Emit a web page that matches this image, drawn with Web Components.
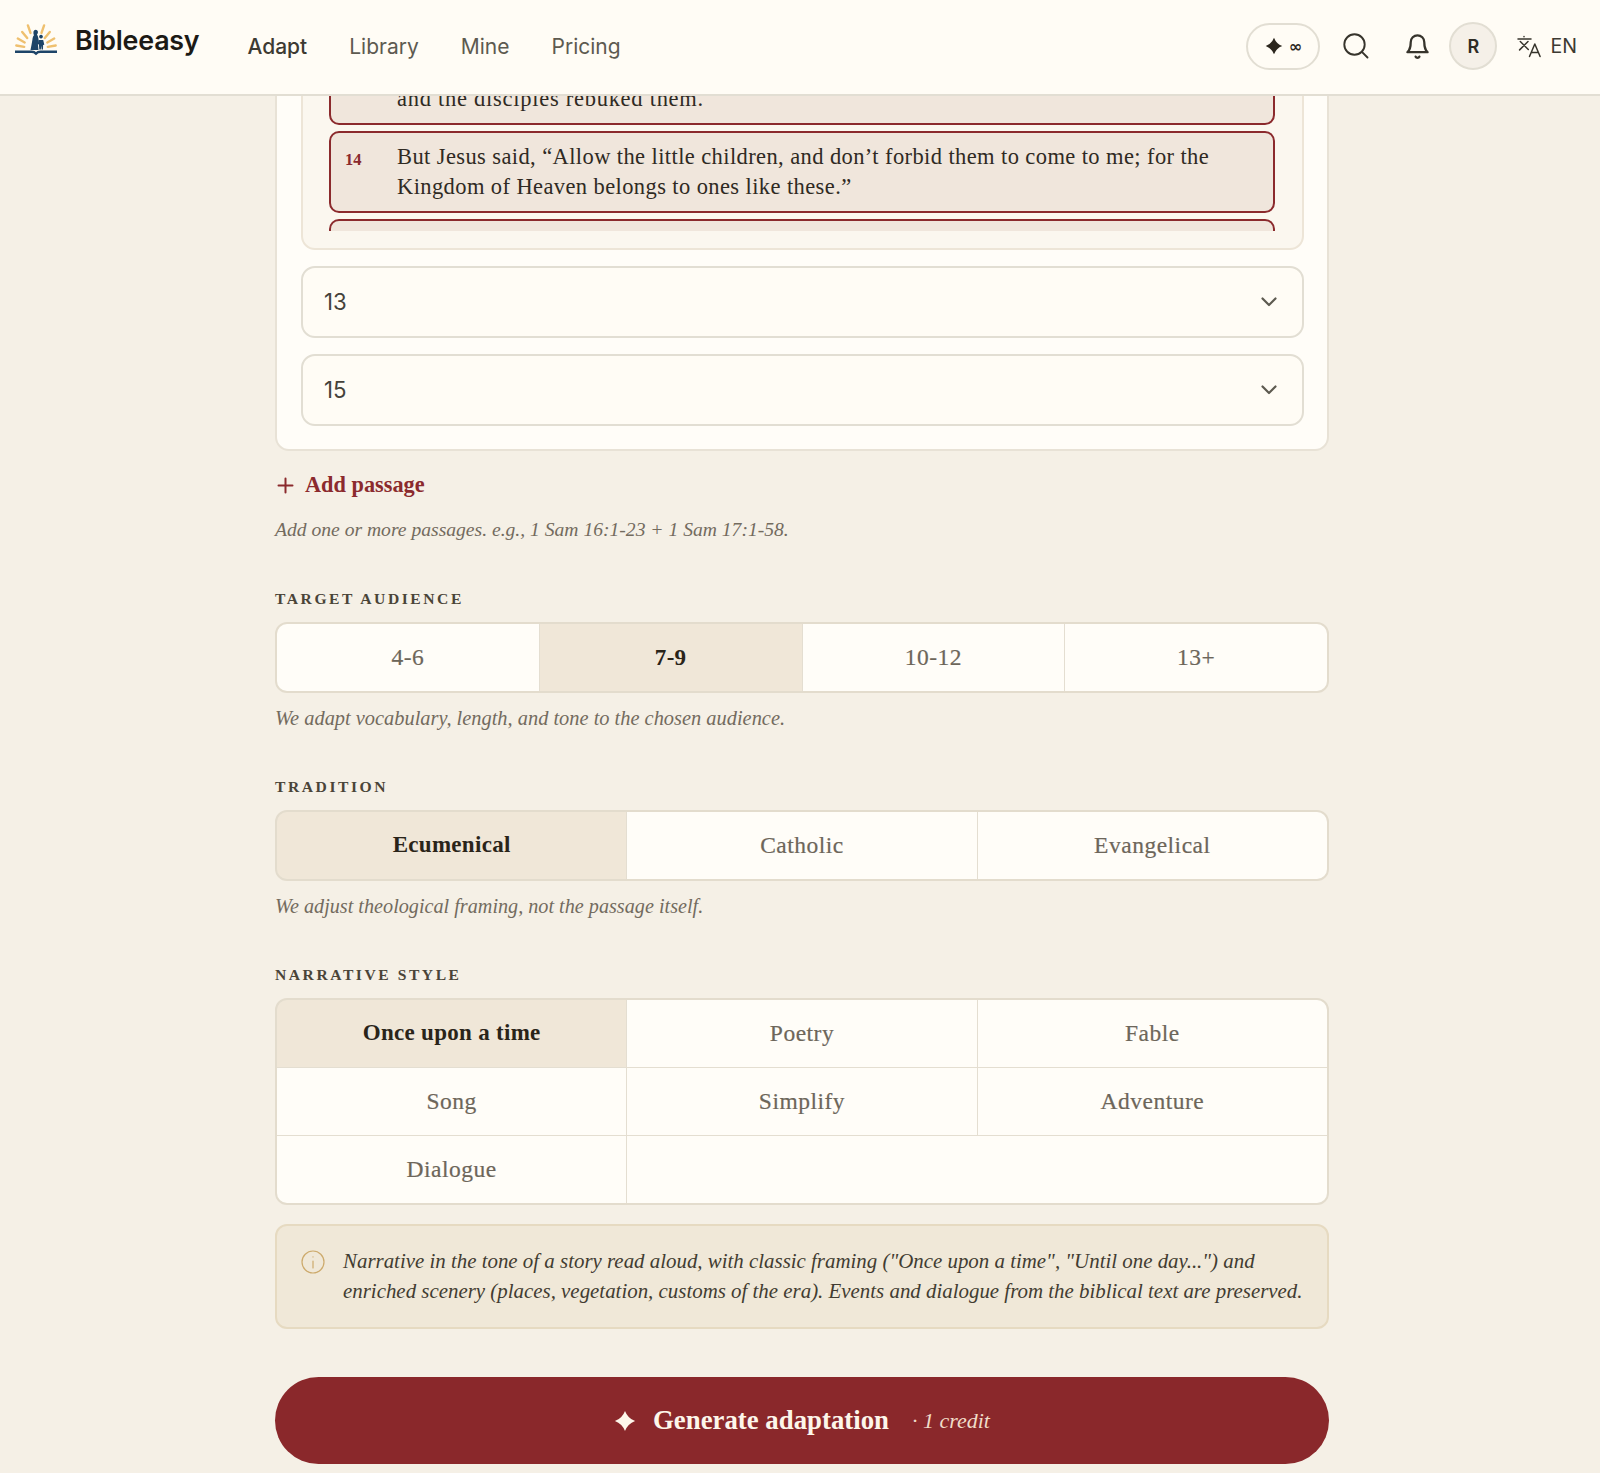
<!DOCTYPE html>
<html lang="en"><head><meta charset="utf-8"><title>Bibleeasy</title>
<style>
html,body{margin:0;padding:0;background:#f5f0e6;height:1473px;overflow:hidden;font-family:"Liberation Serif",serif;color:#2b2720}
</style></head><body>
<app-header></app-header>
<page-main>
  <form-card>
    <verse-panel>
      <verse-item class="cut">and the disciples rebuked them.</verse-item>
      <verse-item num="14">But Jesus said, “Allow the little children, and don’t forbid them to come to me; for the Kingdom of Heaven belongs to ones like these.”</verse-item>
      <verse-item class="stub"></verse-item>
    </verse-panel>
    <select-field>13</select-field>
    <select-field>15</select-field>
  </form-card>
  <add-passage>Add passage</add-passage>
  <hint-text style="margin-top:15px;font-size:19.6px">Add one or more passages. e.g., 1 Sam 16:1-23 + 1 Sam 17:1-58.</hint-text>
  <field-label>Target audience</field-label>
  <seg-group cols="4">
    <seg-item>4-6</seg-item><seg-item active>7-9</seg-item><seg-item>10-12</seg-item><seg-item>13+</seg-item>
  </seg-group>
  <hint-text style="font-size:20.4px">We adapt vocabulary, length, and tone to the chosen audience.</hint-text>
  <field-label>Tradition</field-label>
  <seg-group cols="3">
    <seg-item active>Ecumenical</seg-item><seg-item>Catholic</seg-item><seg-item>Evangelical</seg-item>
  </seg-group>
  <hint-text>We adjust theological framing, not the passage itself.</hint-text>
  <field-label>Narrative style</field-label>
  <seg-group cols="3" style="--h:67.2px">
    <seg-item active>Once upon a time</seg-item><seg-item>Poetry</seg-item><seg-item>Fable</seg-item>
    <seg-item>Song</seg-item><seg-item>Simplify</seg-item><seg-item>Adventure</seg-item>
    <seg-item>Dialogue</seg-item><seg-item empty></seg-item>
  </seg-group>
  <info-note>Narrative in the tone of a story read aloud, with classic framing ("Once upon a time", "Until one day...") and enriched scenery (places, vegetation, customs of the era). Events and dialogue from the biblical text are preserved.</info-note>
  <generate-button>Generate adaptation<span slot="note">· 1 credit</span></generate-button>
</page-main>
<script>
function def(name, css, html, init){
  customElements.define(name, class extends HTMLElement{
    constructor(){super();const r=this.attachShadow({mode:'open'});r.innerHTML='<style>'+css+'</style>'+(typeof html==='function'?html(this):html);}
    connectedCallback(){ if(init) init(this); }
  });
}
const STAR='M12 1Q15 9 23 12Q15 15 12 23Q9 15 1 12Q9 9 12 1Z';
const rays=[[-80,20],[-60,21],[-39,22],[-19,25],[19,25],[39,22],[60,21],[80,20]].map(([a,r2])=>{const t=a*Math.PI/180,s=Math.sin(t),c=Math.cos(t),cx=24,cy=28;
  const r1=r2-8;
  return `<line x1="${(cx+r1*s).toFixed(1)}" y1="${(cy-r1*c).toFixed(1)}" x2="${(cx+r2*s).toFixed(1)}" y2="${(cy-r2*c).toFixed(1)}"/>`}).join('');

def('app-header',`
:host{display:flex;align-items:center;position:relative;z-index:5;box-sizing:border-box;height:96px;background:#fffcf5;border-bottom:2px solid #e2ded3;padding:0 23px 2px 12px;font-family:Inter,sans-serif}
.logo{display:flex;align-items:center;gap:15px;margin-top:-13px}
.logo svg{display:block;width:48px;height:40px;margin-top:2px}
.name{font-size:26.8px;font-weight:600;color:#1c1a15;letter-spacing:-.2px}
nav{display:flex;gap:42px;margin-left:48px;font-size:21px;font-weight:400;color:#5d5a50}
nav b{font-weight:500;color:#3d3a32}
.right{margin-left:auto;display:flex;align-items:center;color:#37342c}
.pill{box-sizing:border-box;width:74px;height:47px;border:2px solid #e2ded3;border-radius:24px;display:flex;align-items:center;justify-content:center;gap:6px;font-family:"DejaVu Sans",sans-serif;font-weight:700;font-size:16px;color:#2b261d}
.pill svg{width:18px;height:18px;fill:#2b261d}
.ic{display:block;fill:none;stroke:#37342c;stroke-width:2;stroke-linecap:round;stroke-linejoin:round}
.av{box-sizing:border-box;width:48px;height:48px;border-radius:50%;background:#f5f0e8;border:2px solid #e2ded3;display:flex;align-items:center;justify-content:center;font-weight:600;font-size:18px;color:#2f2c25}
.lang{display:flex;align-items:center;gap:9px;font-size:19.6px;font-weight:400;color:#3d3a32}
`,`<div class="logo"><svg viewBox="0 0 48 40" aria-hidden="true">
<g stroke="#efc06f" stroke-width="2.4" stroke-linecap="round">${rays}</g>
<path fill="#1d4468" d="M21.5 10.5a2.3 2.3 0 0 1 4.4 0c.2 1.3-.3 2.3-1 3 1 1 1.4 3 1.7 5.2l.5 4.3-1.2.3.6 5.7H18.5c.7-3.6 1.4-6.8 1.9-10.2.3-2.2.5-3.5 1.6-4.6-.5-.9-.7-2-.5-3.7Z"/>
<path fill="#1d4468" d="M29 17.5a1.9 1.9 0 1 1 .01 0ZM26.6 19h4.6l1.1 4.8-1.2.3-.1 4.5h-1.4l-.3-3.8-.5 3.8h-1.5l-.4-5.2-.6-.2Z"/>
<path fill="none" stroke="#1d4468" stroke-width="2.4" d="M3 30.8h16.5c2 0 3.3.5 4.5 1.8 1.2-1.3 2.5-1.8 4.5-1.8H45"/>
</svg><span class="name">Bibleeasy</span></div>
<nav><b>Adapt</b><span>Library</span><span>Mine</span><span>Pricing</span></nav>
<div class="right">
<div class="pill"><svg viewBox="0 0 24 24" aria-hidden="true"><path d="${STAR}"/></svg><span>∞</span></div>
<svg class="ic" style="margin-left:23px;width:26px;height:26px;stroke-width:1.9" viewBox="0 0 26 26" aria-hidden="true"><circle cx="11.5" cy="11.5" r="10.2"/><path d="M18.9 18.9 24.5 24.5"/></svg>
<svg class="ic" style="margin-left:35px;width:27px;height:27px" viewBox="0 0 24 24" aria-hidden="true"><path d="M6 8a6 6 0 0 1 12 0c0 7 3 9 3 9H3s3-2 3-9"/><path d="M10.3 21a1.9 1.9 0 0 0 3.4 0"/></svg>
<div class="av" style="margin-left:18px">R</div>
<div class="lang" style="margin-left:20px"><svg class="ic" style="width:24px;height:24px;stroke-width:1.5" viewBox="0 0 24 24" aria-hidden="true"><path d="M1 5h13M7 2.6v.1M3.3 7.5l8 8M11 7.5l-8.4 8.4M12.5 22.5 17.8 10l5.3 12.5M14.4 18.5h6.8"/></svg><span>EN</span></div>
</div>`);

def('page-main',`
:host{display:block;overflow:hidden;height:1377px}
.in{width:1054px;margin:-56px 0 0 275px;display:flex;flex-direction:column}
`,`<div class="in"><slot></slot></div>`);

def('form-card',`
:host{display:flex;flex-direction:column;gap:16px;box-sizing:border-box;background:#fffdf8;border:2px solid #e8e2d6;border-radius:14px;padding:19px 23px 23px 24px}
`,`<slot></slot>`);

def('verse-panel',`
:host{display:block;box-sizing:border-box;background:#fbf7ef;border:2px solid #ede5d7;border-radius:14px;padding:10px 27px 17px 26px}
.list{display:flex;flex-direction:column;gap:6px;height:158px;overflow:hidden}
`,`<div class="list"><slot></slot></div>`);

def('verse-item',`
:host{display:grid;grid-template-columns:52px 1fr;flex:none;box-sizing:border-box;background:#f0e6dc;border:2px solid #8b2a2d;border-radius:10px;padding:9px 50px 9px 14px;font-size:22.5px;letter-spacing:.4px;line-height:30px;color:#2f2a23}
:host(.stub){height:60px}
:host(.cut){letter-spacing:.73px}
.n{font-weight:700;font-size:16.5px;letter-spacing:0;line-height:35px;color:#8b2a2d}
`,h=>`<span class="n">${h.getAttribute('num')||''}</span><span class="t"><slot></slot></span>`);

def('select-field',`
:host{display:flex;align-items:center;justify-content:space-between;box-sizing:border-box;height:72px;background:#fffcf5;border:2px solid #e2ded3;border-radius:14px;padding:0 24px 2px 21px;font-family:Inter,sans-serif;font-size:22.2px;color:#45423a}
svg{width:18px;height:18px;fill:none;stroke:#5d5a50;stroke-width:2.2;stroke-linecap:round;stroke-linejoin:round;margin-top:2px}
`,`<span><slot></slot></span><svg viewBox="0 0 18 18" aria-hidden="true"><path d="M2.5 5.5 9 12l6.5-6.5"/></svg>`);

def('add-passage',`
:host{display:flex;align-items:center;gap:11px;margin:19px 0 0 2px;height:30px;font-size:22.3px;font-weight:700;color:#8b2a2d}
svg{width:17px;height:17px;stroke:#8b2a2d;stroke-width:2;fill:none;stroke-linecap:round}
`,`<svg viewBox="0 0 17 17" aria-hidden="true"><path d="M8.5 1.5v14M1.5 8.5h14"/></svg><span><slot></slot></span>`);

def('hint-text',`
:host{display:block;margin-top:10px;height:30px;font-style:italic;font-size:20.2px;line-height:30px;color:#736b5e}
`,`<slot></slot>`);

def('field-label',`
:host{display:block;margin-top:42px;height:24px;font-size:15.6px;font-weight:700;line-height:24px;letter-spacing:2.55px;text-transform:uppercase;color:#4a4438}
`,`<slot></slot>`);

def('seg-group',`
:host{display:block;margin-top:11.3px}
.g{display:grid;gap:1px;background:#e4ded1;border:2px solid #e3dccd;border-radius:12px;overflow:hidden}
`,h=>`<div class="g" style="grid-template-columns:repeat(${h.getAttribute('cols')},1fr)"><slot></slot></div>`);

def('seg-item',`
:host{display:flex;align-items:center;justify-content:center;height:var(--h,66.5px);background:#fffdf8;font-size:23.5px;letter-spacing:.5px;color:#6d665a;-webkit-text-stroke:.2px #6d665a}
:host([active]){background:#f0e7d8;font-size:23px;letter-spacing:.3px;font-weight:700;color:#2a2419;-webkit-text-stroke:0}
:host([empty]){grid-column:span 2}
`,`<slot></slot>`);

def('info-note',`
:host{display:flex;gap:18px;box-sizing:border-box;height:105px;margin-top:19px;background:#f0e8d8;border:2px solid #e6dac1;border-radius:12px;padding:20px 6px 0 24px;font-style:italic;font-size:20.9px;line-height:30px;color:#423c31}
svg{flex:none;width:24px;height:24px;margin-top:4px;fill:none;stroke:#cdaa6c;stroke-width:1.2;stroke-linecap:round}
span{white-space:normal}
`,`<svg viewBox="0 0 24 24" aria-hidden="true"><circle cx="12" cy="12" r="11"/><path d="M12 11v7M12 6.8v.1"/></svg><span><slot></slot></span>`);

def('generate-button',`
:host{display:flex;align-items:center;justify-content:center;box-sizing:border-box;height:87px;margin-top:48px;background:#8a282b;border-radius:44px;color:#fdf6ea;font-size:26.8px;font-weight:700}
svg{width:22px;height:22px;fill:#fdf6ea;margin-right:17px}
.note{margin-left:23px;font-style:italic;font-weight:400;font-size:22px;color:#f0dcc8}
`,`<svg viewBox="0 0 24 24" aria-hidden="true"><path d="${STAR}"/></svg><span><slot></slot></span><span class="note"><slot name="note"></slot></span>`);
</script>
</body></html>
